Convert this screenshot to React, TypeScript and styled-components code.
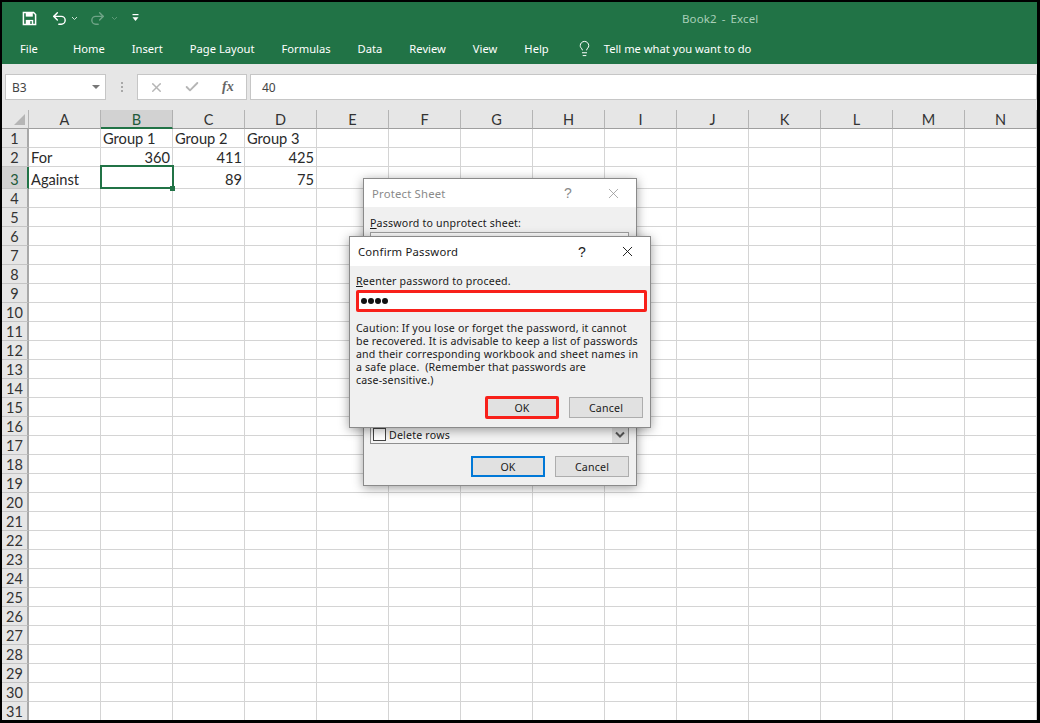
import * as React from 'react'
import styled, { createGlobalStyle } from 'styled-components'
import { Check, Lightbulb, Undo2, Redo2, X } from 'lucide-react'

const GlobalStyle = createGlobalStyle`
  html, body {
    margin: 0;
    padding: 0;
    overflow: hidden;
    background: #000;
  }
  * { box-sizing: border-box; }
`

const COLUMNS = ['A', 'B', 'C', 'D', 'E', 'F', 'G', 'H', 'I', 'J', 'K', 'L', 'M', 'N']
const ROWS = Array.from({ length: 31 }, (_, i) => i + 1)
const CELLS: Record<string, { text: string; right?: boolean }> = {
  B1: { text: 'Group 1' },
  C1: { text: 'Group 2' },
  D1: { text: 'Group 3' },
  A2: { text: 'For' },
  B2: { text: '360', right: true },
  C2: { text: '411', right: true },
  D2: { text: '425', right: true },
  A3: { text: 'Against' },
  C3: { text: '89', right: true },
  D3: { text: '75', right: true },
}

const Screen = styled.div`
  position: relative;
  width: 1040px;
  height: 723px;
  padding: 2px 3px 3px 2px;
  background: #000;
  overflow: hidden;
  display: flex;
  flex-direction: column;
`

const TitleBar = styled.div`
  height: 32px;
  background: #217346;
  display: grid;
  grid-template-columns: 660px auto 1fr;
  align-items: center;
  padding-left: 20px;
  font-family: "Noto Sans", sans-serif;
`

const QuickAccess = styled.div`
  display: flex;
  align-items: center;
  color: #fff;
`

const QuickButton = styled.span<{ $gap: number; $dim?: boolean }>`
  display: inline-flex;
  margin-right: ${({ $gap }) => $gap}px;
  opacity: ${({ $dim }) => ($dim ? 0.35 : 1)};
`

const BookTitle = styled.div`
  font-size: 11.5px;
  color: #a8cfb8;
  letter-spacing: 0.1px;
  word-spacing: 2px;
`

const TabBar = styled.div`
  height: 30px;
  background: #217346;
  display: flex;
  align-items: center;
  padding-left: 18px;
  padding-bottom: 2px;
  font-family: "Noto Sans", sans-serif;
  font-size: 11.2px;
  color: #fff;
`

const Tab = styled.span<{ $gap?: number }>`
  margin-right: ${({ $gap }) => $gap ?? 27}px;
  white-space: nowrap;
`

const TellMe = styled.span`
  display: inline-flex;
  align-items: center;
  gap: 11px;
  color: #fff;
  white-space: nowrap;
`

const FormulaArea = styled.div`
  height: 46px;
  background: #e6e6e6;
  display: flex;
  align-items: flex-start;
  padding: 10px 0 0 3px;
  font-family: "Noto Sans", sans-serif;
  font-size: 12px;
  color: #444;
`

const FieldBox = styled.div<{ $width?: number }>`
  height: 26px;
  width: ${({ $width }) => ($width ? `${$width}px` : 'auto')};
  flex: ${({ $width }) => ($width ? 'none' : 1)};
  background: #fff;
  border: 1px solid #c6c6c6;
  display: flex;
  align-items: center;
`

const NameBox = styled(FieldBox)`
  justify-content: space-between;
  padding: 0 5px 0 6px;
`

const Caret = styled.span`
  width: 0;
  height: 0;
  border-left: 4px solid transparent;
  border-right: 4px solid transparent;
  border-top: 4px solid #777;
`

const Grip = styled.div`
  width: 31px;
  height: 26px;
  display: flex;
  flex-direction: column;
  align-items: center;
  justify-content: center;
  gap: 2px;
`

const GripDot = styled.span`
  width: 2px;
  height: 2px;
  background: #a8a8a8;
`

const FxBox = styled(FieldBox)`
  margin-right: 3px;
  padding-left: 11px;
  gap: 20px;
  color: #b5b5b5;
`

const FxLabel = styled.span`
  font-family: "Liberation Serif", serif;
  font-style: italic;
  font-weight: 700;
  font-size: 14px;
  color: #666;
  margin-left: 2px;
`

const FormulaValue = styled(FieldBox)`
  padding-left: 11px;
`

const Sheet = styled.div`
  flex: 1;
  display: grid;
  grid-template-columns: 27px repeat(14, 72px);
  grid-template-rows: 19px 19px 19px 22px repeat(28, 19px);
  background: #fff;
  font-family: Lato, sans-serif;
  overflow: hidden;
`

const Corner = styled.div`
  background: #e6e6e6;
  border-right: 1px solid #b4b4b4;
  border-bottom: 1px solid #9f9f9f;
  display: flex;
  align-items: flex-end;
  justify-content: flex-end;
  padding: 0 3px 3px 0;
`

const CornerMark = styled.span`
  width: 0;
  height: 0;
  border-left: 11px solid transparent;
  border-bottom: 11px solid #b5b5b5;
`

const ColumnHead = styled.div<{ $active?: boolean }>`
  background: ${({ $active }) => ($active ? '#d2d2d2' : '#e6e6e6')};
  border-right: 1px solid ${({ $active }) => ($active ? '#b0b0b0' : '#b4b4b4')};
  border-bottom: ${({ $active }) => ($active ? '2px solid #217346' : '1px solid #9f9f9f')};
  display: flex;
  justify-content: center;
  align-items: center;
  padding-top: 1px;
  font-size: 14.5px;
  color: ${({ $active }) => ($active ? '#215a3a' : '#333')};
`

const RowHead = styled.div<{ $active?: boolean }>`
  background: ${({ $active }) => ($active ? '#d2d2d2' : '#e6e6e6')};
  border-right: ${({ $active }) => ($active ? '2px solid #217346' : '2px solid #a8a8a8')};
  border-bottom: 1px solid #c4c4c4;
  display: flex;
  align-items: flex-end;
  justify-content: center;
  line-height: 16px;
  font-size: 14.5px;
  color: ${({ $active }) => ($active ? '#215a3a' : '#333')};
`

const Cell = styled.div<{ $right?: boolean }>`
  position: relative;
  border-right: 1px solid #d4d4d4;
  border-bottom: 1px solid #d4d4d4;
  display: flex;
  align-items: flex-end;
  justify-content: ${({ $right }) => ($right ? 'flex-end' : 'flex-start')};
  padding: 0 2px;
  line-height: 16px;
  font-size: 14.67px;
  color: #2a2a2a;
  white-space: nowrap;
`

const Selection = styled.div`
  position: absolute;
  z-index: 1;
  left: -1px;
  top: -2px;
  right: -2px;
  bottom: -1px;
  border: 2px solid #217346;
`

const FillHandle = styled.span`
  position: absolute;
  right: -3px;
  bottom: -4px;
  width: 5px;
  height: 5px;
  background: #217346;
`

const Dialog = styled.div<{ $left: number; $top: number; $width: number; $height: number; $z: number }>`
  position: absolute;
  left: ${({ $left }) => $left}px;
  top: ${({ $top }) => $top}px;
  width: ${({ $width }) => $width}px;
  height: ${({ $height }) => $height}px;
  z-index: ${({ $z }) => $z};
  background: #f0f0f0;
  border: 1px solid #8a8a8a;
  box-shadow: 0 2px 10px rgba(0, 0, 0, 0.38);
  font-family: "Noto Sans", sans-serif;
  font-size: 10.6px;
  color: #1a1a1a;
  display: flex;
  flex-direction: column;
`

const DialogHead = styled.div<{ $height: number; $dim?: boolean }>`
  height: ${({ $height }) => $height}px;
  flex: none;
  background: #fff;
  display: flex;
  align-items: center;
  padding: 0 14px 0 8px;
  font-size: 11.3px;
  letter-spacing: 0.2px;
  color: ${({ $dim }) => ($dim ? '#8a8a8a' : '#1a1a1a')};
`

const DialogTitle = styled.span`
  flex: 1;
`

const HelpMark = styled.span`
  width: 41px;
  font-size: 14px;
  font-family: "Liberation Sans", sans-serif;
`

const ProtectBody = styled.div`
  flex: 1;
  display: flex;
  flex-direction: column;
  padding: 9px 7px 8px 6px;
`

const Label = styled.div`
  height: 15px;
  line-height: 15px;
  letter-spacing: 0.2px;
  white-space: nowrap;
`

const HotKey = styled.span`
  text-decoration: underline;
`

const ProtectInput = styled.div`
  height: 18px;
  margin-top: 1px;
  background: #fff;
  border: 1px solid #a0a0a0;
`

const PermissionList = styled.div`
  margin-top: auto;
  height: 18px;
  border: 1px solid #8f8f8f;
  border-top: 0;
  display: flex;
  align-items: center;
  padding-left: 2px;
  gap: 3px;
  background: #f4f4f4;
`

const CheckSquare = styled.span`
  width: 13px;
  height: 13px;
  background: #fff;
  border: 1px solid #444;
`

const ListText = styled.span`
  flex: 1;
  letter-spacing: 0.2px;
`

const ListArrow = styled.span`
  width: 16px;
  height: 100%;
  background: #dcdcdc;
  display: flex;
  align-items: center;
  justify-content: center;
`

const ButtonRow = styled.div<{ $gap: number; $top: number }>`
  display: flex;
  justify-content: flex-end;
  align-items: center;
  gap: ${({ $gap }) => $gap}px;
  margin-top: ${({ $top }) => $top}px;
`

const Button = styled.div<{ $variant?: 'blue' | 'red' }>`
  width: 74px;
  height: ${({ $variant }) => ($variant === 'red' ? 23 : 21)}px;
  background: #e1e1e1;
  display: flex;
  align-items: center;
  justify-content: center;
  font-size: 10.6px;
  letter-spacing: 0.2px;
  border: ${({ $variant }) =>
    $variant === 'blue' ? '2px solid #0078d7' : $variant === 'red' ? '3px solid #f8201a' : '1px solid #adadad'};
  border-radius: ${({ $variant }) => ($variant === 'red' ? '2px' : '0')};
`

const ConfirmBody = styled.div`
  flex: 1;
  padding: 8px 7px 0 6px;
  display: flex;
  flex-direction: column;
`

const PasswordField = styled.div`
  width: 291px;
  height: 22px;
  margin-top: 1px;
  background: #fff;
  border: 3px solid #f8201a;
  border-radius: 2px;
  display: flex;
  align-items: center;
  padding-left: 2px;
  gap: 1px;
`

const PasswordDot = styled.span`
  width: 6px;
  height: 6px;
  border-radius: 50%;
  background: #111;
`

const Caution = styled.p`
  margin: 10px 0 0;
  line-height: 13px;
  letter-spacing: 0.17px;
  white-space: pre;
`

const SaveIcon = () => (
  <svg width="15" height="15" viewBox="0 0 16 16">
    <path d="M1.5 1.5h10.8l2.2 2.2v10.8h-13z" fill="none" stroke="#fff" strokeWidth="1.6" />
    <rect x="4" y="2" width="7.5" height="4" fill="#fff" />
    <rect x="4" y="9.5" width="8" height="5" fill="#fff" />
    <rect x="8.8" y="10.8" width="1.6" height="3" fill="#217346" />
  </svg>
)

const TinyChevron = () => (
  <svg width="7" height="5" viewBox="0 0 7 5">
    <path d="M1 1l2.5 2.5L6 1" fill="none" stroke="#cfe3d7" strokeWidth="1" />
  </svg>
)

const CustomizeIcon = () => (
  <svg width="7" height="8" viewBox="0 0 7 8">
    <rect x="0.5" y="0" width="6" height="1.2" fill="#fff" />
    <path d="M0.5 3.2h6L3.5 7z" fill="#fff" />
  </svg>
)

const ListChevron = () => (
  <svg width="10" height="8" viewBox="0 0 10 8">
    <path d="M1 1.5l4 4 4-4" fill="none" stroke="#555" strokeWidth="2" />
  </svg>
)

const cellKey = (col: string, row: number) => `${col}${row}`

export default function App() {
  return (
    <Screen>
      <GlobalStyle />
      <TitleBar>
        <QuickAccess>
          <QuickButton $gap={14}><SaveIcon /></QuickButton>
          <QuickButton $gap={3}><Undo2 size={17} strokeWidth={2} /></QuickButton>
          <QuickButton $gap={11}><TinyChevron /></QuickButton>
          <QuickButton $gap={5} $dim><Redo2 size={17} strokeWidth={2} /></QuickButton>
          <QuickButton $gap={14} $dim><TinyChevron /></QuickButton>
          <QuickButton $gap={0}><CustomizeIcon /></QuickButton>
        </QuickAccess>
        <BookTitle>Book2 - Excel</BookTitle>
        <span />
      </TitleBar>

      <TabBar>
        <Tab $gap={35}>File</Tab>
        <Tab>Home</Tab>
        <Tab>Insert</Tab>
        <Tab>Page Layout</Tab>
        <Tab>Formulas</Tab>
        <Tab>Data</Tab>
        <Tab>Review</Tab>
        <Tab>View</Tab>
        <Tab>Help</Tab>
        <TellMe>
          <Lightbulb size={17} strokeWidth={1.4} />
          Tell me what you want to do
        </TellMe>
      </TabBar>

      <FormulaArea>
        <NameBox $width={101}>
          B3
          <Caret />
        </NameBox>
        <Grip>
          <GripDot />
          <GripDot />
          <GripDot />
        </Grip>
        <FxBox $width={110}>
          <X size={15} strokeWidth={2.4} />
          <Check size={16} strokeWidth={2.8} />
          <FxLabel>fx</FxLabel>
        </FxBox>
        <FormulaValue>40</FormulaValue>
      </FormulaArea>

      <Sheet>
        <Corner><CornerMark /></Corner>
        {COLUMNS.map((col) => (
          <ColumnHead key={col} $active={col === 'B'}>{col}</ColumnHead>
        ))}
        {ROWS.map((row) => (
          <React.Fragment key={row}>
            <RowHead $active={row === 3}>{row}</RowHead>
            {COLUMNS.map((col) => {
              const key = cellKey(col, row)
              const cell = CELLS[key]
              return (
                <Cell key={key} $right={cell?.right}>
                  {cell?.text}
                  {key === 'B3' && (
                    <Selection>
                      <FillHandle />
                    </Selection>
                  )}
                </Cell>
              )
            })}
          </React.Fragment>
        ))}
      </Sheet>

      <Dialog $left={363} $top={178} $width={274} $height={308} $z={2}>
        <DialogHead $height={28} $dim>
          <DialogTitle>Protect Sheet</DialogTitle>
          <HelpMark>?</HelpMark>
          <X size={17} strokeWidth={1} />
        </DialogHead>
        <ProtectBody>
          <Label><HotKey>P</HotKey>assword to unprotect sheet:</Label>
          <ProtectInput />
          <PermissionList>
            <CheckSquare />
            <ListText>Delete rows</ListText>
            <ListArrow><ListChevron /></ListArrow>
          </PermissionList>
          <ButtonRow $gap={10} $top={12}>
            <Button $variant="blue">OK</Button>
            <Button>Cancel</Button>
          </ButtonRow>
        </ProtectBody>
      </Dialog>

      <Dialog $left={349} $top={236} $width={302} $height={192} $z={3}>
        <DialogHead $height={29}>
          <DialogTitle>Confirm Password</DialogTitle>
          <HelpMark>?</HelpMark>
          <X size={17} strokeWidth={1.3} color="#111" />
        </DialogHead>
        <ConfirmBody>
          <Label><HotKey>R</HotKey>eenter password to proceed.</Label>
          <PasswordField>
            <PasswordDot />
            <PasswordDot />
            <PasswordDot />
            <PasswordDot />
          </PasswordField>
          <Caution>
            {'Caution: If you lose or forget the password, it cannot\nbe recovered. It is advisable to keep a list of passwords\nand their corresponding workbook and sheet names in\na safe place.  (Remember that passwords are\ncase-sensitive.)'}
          </Caution>
          <ButtonRow $gap={10} $top={9}>
            <Button $variant="red">OK</Button>
            <Button>Cancel</Button>
          </ButtonRow>
        </ConfirmBody>
      </Dialog>
    </Screen>
  )
}
